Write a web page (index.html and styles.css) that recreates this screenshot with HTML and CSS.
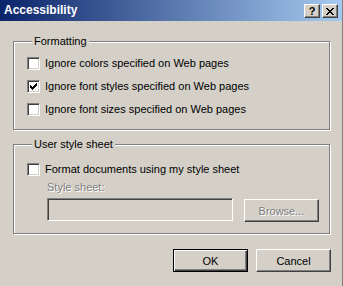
FILE: index.html
```html
<!DOCTYPE html>
<html lang="en">
<head>
    <meta charset="UTF-8">
    <title>Accessibility</title>
    <link rel="stylesheet" href="styles.css">
</head>
<body>
    <div class="window">
        <!-- Caption -->
        <div class="titlebar">
            <span class="title">Accessibility</span>
            <div class="title-buttons">
                <span class="tbtn tbtn-help">?</span>
                <span class="tbtn">
                    <svg width="8" height="7" viewBox="0 0 8 7" shape-rendering="crispEdges">
                        <path d="M0 0h2v1H0zM6 0h2v1H6zM1 1h2v1H1zM5 1h2v1H5zM2 2h4v1H2zM3 3h2v1H3zM2 4h4v1H2zM1 5h2v1H1zM5 5h2v1H5zM0 6h2v1H0zM6 6h2v1H6z" fill="#000"/>
                    </svg>
                </span>
            </div>
        </div>

        <div class="content">
            <fieldset class="group group-format">
                <legend>Formatting</legend>
                <div class="check-list">
                    <label class="check-row"><span class="checkbox"></span><span>Ignore colors specified on Web pages</span></label>
                    <label class="check-row">
                        <span class="checkbox">
                            <svg width="7" height="7" viewBox="0 0 7 7" shape-rendering="crispEdges">
                                <path d="M0 2h1v3H0zM1 3h1v3H1zM2 4h1v3H2zM3 3h1v3H3zM4 2h1v3H4zM5 1h1v3H5zM6 0h1v3H6z" fill="#000"/>
                            </svg>
                        </span>
                        <span>Ignore font styles specified on Web pages</span>
                    </label>
                    <label class="check-row"><span class="checkbox"></span><span>Ignore font sizes specified on Web pages</span></label>
                </div>
            </fieldset>

            <fieldset class="group group-style">
                <legend>User style sheet</legend>
                <label class="check-row"><span class="checkbox"></span><span>Format documents using my style sheet</span></label>
                <div class="field-label disabled">Style sheet:</div>
                <div class="field-row">
                    <div class="textbox"></div>
                    <button class="btn btn-browse" type="button" disabled>Browse...</button>
                </div>
            </fieldset>

            <div class="actions">
                <button class="btn btn-default" type="button">OK</button>
                <button class="btn" type="button">Cancel</button>
            </div>
        </div>
    </div>
</body>
</html>
```

FILE: styles.css
```css
* {
    box-sizing: border-box;
}

body {
    margin: 0;
    background: #d4d0c8;
    font-family: "Liberation Sans", Arial, sans-serif;
    font-size: 11px;
    color: #000;
}

.window {
    width: 343px;
    height: 286px;
    border-right: 1px solid #808080;
    overflow: hidden;
}

/* Caption */
.titlebar {
    height: 21px;
    display: flex;
    align-items: flex-start;
    justify-content: space-between;
    padding: 0 4px 0 4px;
    background: linear-gradient(to right, #0a246a, #a6caf0);
}

.title {
    color: #fff;
    font-weight: bold;
    font-size: 12px;
    line-height: 21px;
}

.title-buttons {
    display: flex;
    gap: 2px;
    margin-top: 4px;
}

.tbtn {
    width: 16px;
    height: 14px;
    display: flex;
    align-items: center;
    justify-content: center;
    background: #d4d0c8;
    border: 1px solid;
    border-color: #fff #404040 #404040 #fff;
    box-shadow: inset -1px -1px 0 #808080;
}

.tbtn-help {
    font-weight: bold;
    font-size: 11px;
    line-height: 12px;
}

/* Group boxes */
.content {
    padding: 14px 12px 0 13px;
}

.group {
    margin: 0;
    min-width: 0;
    border: 1px solid #808080;
    box-shadow: inset 1px 1px 0 #fff, 1px 1px 0 #fff;
}

.group legend {
    margin-left: 5px;
    padding: 0 2px;
    line-height: 13px;
    background: #d4d0c8;
}

.group-format {
    padding: 9px 0 13px 13px;
}

.group-style {
    margin-top: 8px;
    padding: 12px 0 11px 13px;
}

.check-list {
    display: flex;
    flex-direction: column;
    gap: 10px;
}

.check-row {
    display: flex;
    align-items: center;
    height: 13px;
    line-height: 13px;
    white-space: nowrap;
}

.checkbox {
    width: 13px;
    height: 13px;
    flex: none;
    display: flex;
    align-items: center;
    justify-content: center;
    margin-right: 5px;
    background: #fff;
    border: 1px solid;
    border-color: #808080 #fff #fff #808080;
    box-shadow: inset 1px 1px 0 #404040, inset -1px -1px 0 #d4d0c8;
}

.disabled,
.btn:disabled {
    color: #808080;
    text-shadow: 1px 1px 0 #fff;
}

.field-label {
    margin: 5px 0 0 20px;
    line-height: 13px;
}

.field-row {
    display: flex;
    align-items: flex-start;
    gap: 11px;
    margin: 4px 0 0 20px;
}

.textbox {
    width: 186px;
    height: 23px;
    background: #d4d0c8;
    border: 1px solid;
    border-color: #808080 #fff #fff #808080;
    box-shadow: inset 1px 1px 0 #404040, inset -1px -1px 0 #d4d0c8;
}

/* Push buttons */
.btn {
    width: 75px;
    height: 23px;
    padding: 0;
    font: inherit;
    color: #000;
    background: #d4d0c8;
    border: 1px solid;
    border-color: #fff #404040 #404040 #fff;
    box-shadow: inset -1px -1px 0 #808080;
}

.btn-browse {
    margin-top: 1px;
}

.btn-browse:disabled {
    color: #808080;
}

.btn-default {
    border-color: #000;
    box-shadow: inset 1px 1px 0 #fff, inset -1px -1px 0 #404040, inset -2px -2px 0 #808080;
}

.actions {
    display: flex;
    justify-content: flex-end;
    gap: 8px;
    margin: 15px -1px 0 0;
}
```
